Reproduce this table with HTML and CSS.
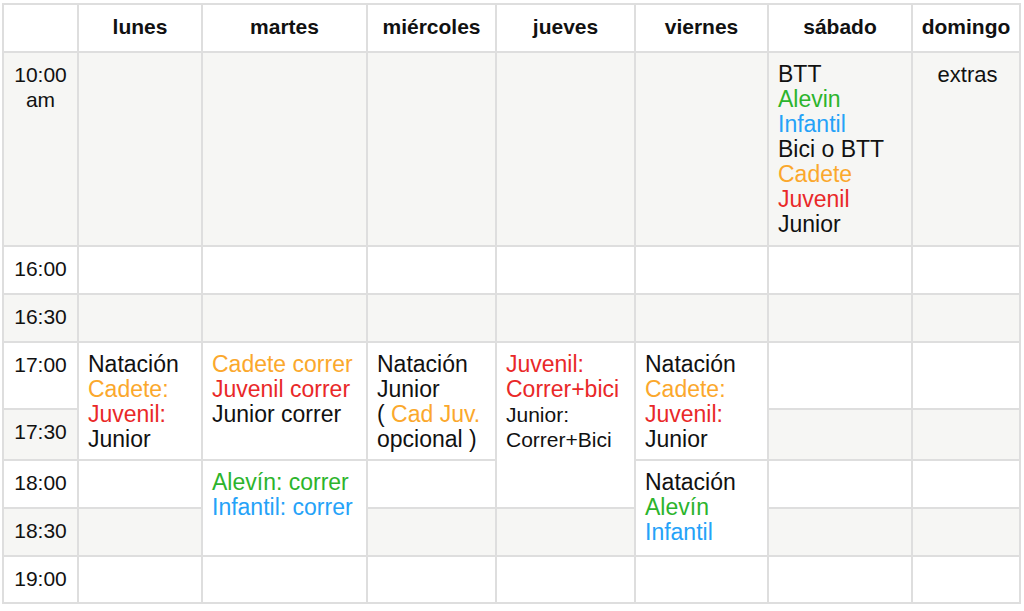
FILE: index.html
```html
<!DOCTYPE html>
<html lang="es">
<head>
<meta charset="utf-8">
<title>Horario</title>
<link rel="stylesheet" href="styles.css">
</head>
<body>
<table class="schedule">
  <colgroup>
    <col class="c-time">
    <col class="c-lun">
    <col class="c-mar">
    <col class="c-mie">
    <col class="c-jue">
    <col class="c-vie">
    <col class="c-sab">
    <col class="c-dom">
  </colgroup>
  <thead>
    <tr class="r-head">
      <th></th>
      <th>lunes</th>
      <th>martes</th>
      <th>miércoles</th>
      <th>jueves</th>
      <th>viernes</th>
      <th>sábado</th>
      <th>domingo</th>
    </tr>
  </thead>
  <tbody>
    <tr class="r-10 gray">
      <td class="time">10:00<br>am</td>
      <td></td><td></td><td></td><td></td><td></td>
      <td>BTT<br><span class="green">Alevin</span><br><span class="blue">Infantil</span><br>Bici o BTT<br><span class="orange">Cadete</span><br><span class="red">Juvenil</span><br>Junior</td>
      <td class="center small">extras</td>
    </tr>
    <tr class="r-std">
      <td class="time">16:00</td>
      <td></td><td></td><td></td><td></td><td></td><td></td><td></td>
    </tr>
    <tr class="r-std gray">
      <td class="time">16:30</td>
      <td></td><td></td><td></td><td></td><td></td><td></td><td></td>
    </tr>
    <tr class="r-17">
      <td class="time">17:00</td>
      <td rowspan="2" class="white">Natación<br><span class="orange">Cadete:</span><br><span class="red">Juvenil:</span><br>Junior</td>
      <td rowspan="2" class="white"><span class="orange">Cadete correr</span><br><span class="red">Juvenil correr</span><br>Junior correr</td>
      <td rowspan="2" class="white">Natación<br>Junior<br>( <span class="orange">Cad Juv.</span><br>opcional )</td>
      <td rowspan="3" class="white"><span class="red">Juvenil:<br>Correr+bici</span><br><span class="smaller">Junior:<br>Correr+Bici</span></td>
      <td rowspan="2" class="white">Natación<br><span class="orange">Cadete:</span><br><span class="red">Juvenil:</span><br>Junior</td>
      <td></td>
      <td></td>
    </tr>
    <tr class="r-1730 gray">
      <td class="time">17:30</td>
      <td></td>
      <td></td>
    </tr>
    <tr class="r-std">
      <td class="time">18:00</td>
      <td></td>
      <td rowspan="2" class="white"><span class="green">Alevín: correr</span><br><span class="blue">Infantil: correr</span></td>
      <td></td>
      <td rowspan="2" class="white">Natación<br><span class="green">Alevín</span><br><span class="blue">Infantil</span></td>
      <td></td>
      <td></td>
    </tr>
    <tr class="r-std gray">
      <td class="time">18:30</td>
      <td></td>
      <td></td>
      <td></td>
      <td></td>
      <td></td>
    </tr>
    <tr class="r-19">
      <td class="time">19:00</td>
      <td></td><td></td><td></td><td></td><td></td><td></td><td></td>
    </tr>
  </tbody>
</table>
</body>
</html>
```

FILE: styles.css
```css
html, body {
  background: #ffffff;
}
body {
  margin: 3px 0 0 2px;
  font-family: "Liberation Sans", Arial, Helvetica, sans-serif;
  color: #111111;
}
.schedule {
  border-collapse: collapse;
  table-layout: fixed;
  width: 1017px;
}
.c-time { width: 75px; }
.c-lun { width: 124px; }
.c-mar { width: 165px; }
.c-mie { width: 129px; }
.c-jue { width: 139px; }
.c-vie { width: 133px; }
.c-sab { width: 144px; }
.c-dom { width: 108px; }

.schedule th,
.schedule td {
  border: 2px solid #dedede;
  padding: 9px 6px 0 9px;
  vertical-align: top;
  text-align: left;
  font-size: 23px;
  line-height: 25px;
  overflow: hidden;
  white-space: nowrap;
}
.schedule th {
  font-size: 21px;
  font-weight: bold;
  text-align: center;
  vertical-align: middle;
  padding: 0 0 3px 0;
  background: #ffffff;
}
.r-head { height: 48px; }
.r-10 { height: 194px; }
.r-std { height: 48px; }
.r-17 { height: 67px; }
.r-1730 { height: 51px; }
.r-19 { height: 47px; }

.gray td { background: #f6f6f4; }
.gray td.white, td.white { background: #ffffff; }

.schedule td.time {
  text-align: center;
  font-size: 21px;
  padding-left: 0;
  padding-right: 0;
}
.schedule td.center { text-align: center; }
.schedule td.small { font-size: 22px; }
.smaller { font-size: 21px; }

.orange { color: #fba82c; }
.red { color: #e92828; }
.green { color: #2cb42c; }
.blue { color: #25a2f8; }
```
